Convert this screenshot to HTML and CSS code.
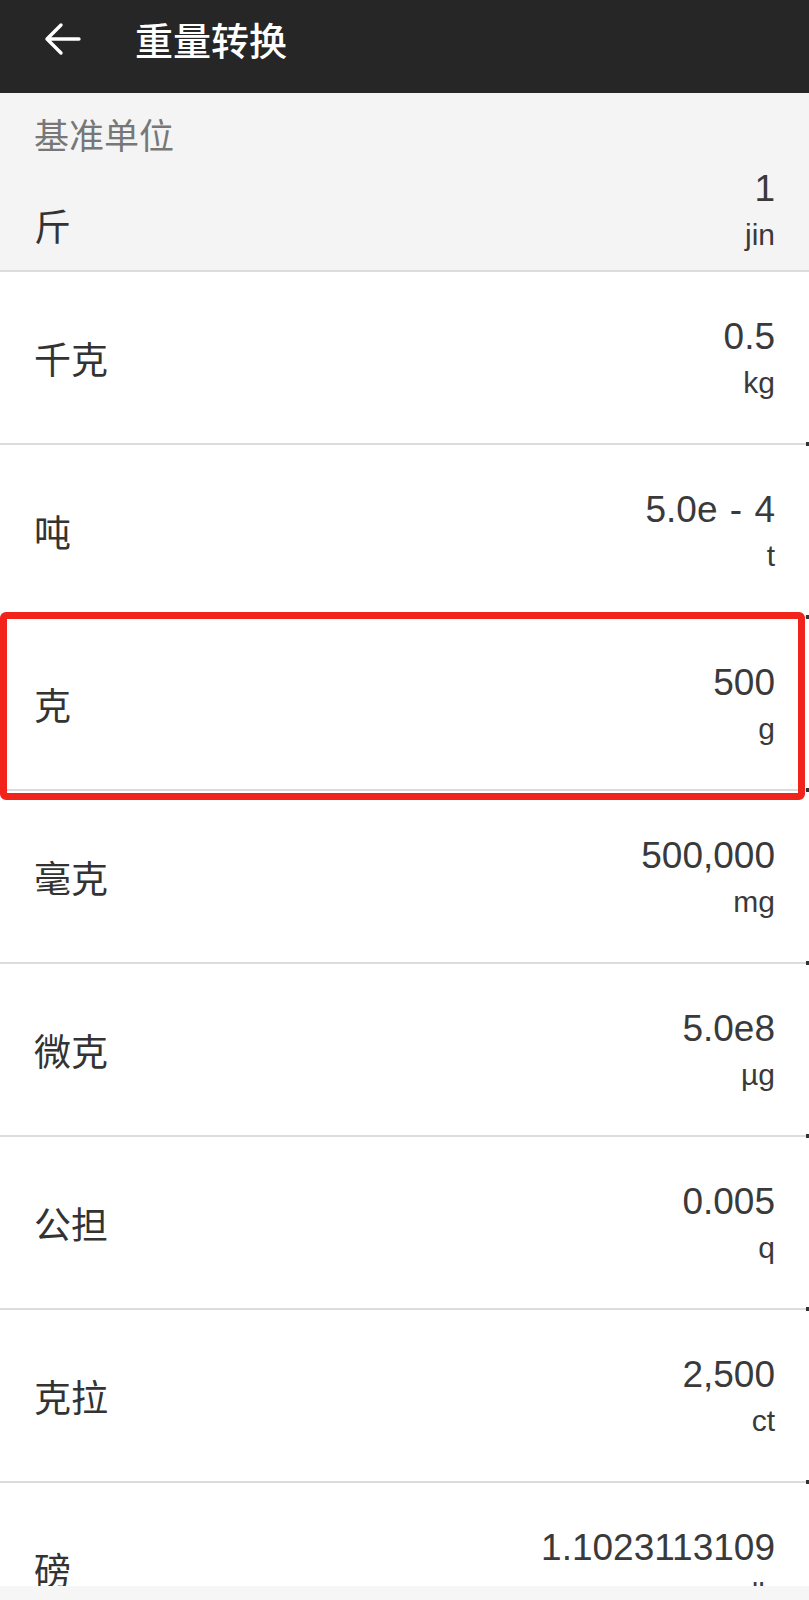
FILE: index.html
```html
<!DOCTYPE html>
<html lang="zh-CN">
<head>
    <meta charset="UTF-8">
    <meta name="viewport" content="width=device-width, initial-scale=1.0">
    <title>重量转换</title>
    <link rel="stylesheet" href="styles.css">
</head>
<body>
    <header class="topbar">
        <svg class="back" viewBox="0 0 40 34" width="40" height="34">
            <path d="M37 17H5M19 3L5 17L19 31" fill="none" stroke="#fff" stroke-width="3.4" stroke-linecap="round" stroke-linejoin="round"/>
        </svg>
        <h1 class="title">重量转换</h1>
    </header>

    <!-- Đơn vị gốc -->
    <section class="base">
        <div class="base-title">基准单位</div>
        <div class="base-row">
            <div class="name">斤</div>
            <div class="amount">
                <div class="value">1</div>
                <div class="unit">jin</div>
            </div>
        </div>
    </section>

    <main class="list">
        <div class="row">
            <div class="name">千克</div>
            <div class="amount"><div class="value">0.5</div><div class="unit">kg</div></div>
        </div>
        <div class="row">
            <div class="name">吨</div>
            <div class="amount"><div class="value">5.0e - 4</div><div class="unit">t</div></div>
        </div>
        <div class="row">
            <div class="name">克</div>
            <div class="amount"><div class="value">500</div><div class="unit">g</div></div>
            <div class="highlight"></div>
        </div>
        <div class="row">
            <div class="name">毫克</div>
            <div class="amount"><div class="value">500,000</div><div class="unit">mg</div></div>
        </div>
        <div class="row">
            <div class="name">微克</div>
            <div class="amount"><div class="value">5.0e8</div><div class="unit">µg</div></div>
        </div>
        <div class="row">
            <div class="name">公担</div>
            <div class="amount"><div class="value">0.005</div><div class="unit">q</div></div>
        </div>
        <div class="row">
            <div class="name">克拉</div>
            <div class="amount"><div class="value">2,500</div><div class="unit">ct</div></div>
        </div>
        <div class="row">
            <div class="name">磅</div>
            <div class="amount"><div class="value">1.1023113109</div><div class="unit">lb</div></div>
        </div>
    </main>

    <div class="bottom-band"></div>
</body>
</html>
```

FILE: styles.css
```css
/* Kiểu chung */
body {
    margin: 0;
    font-family: "Liberation Sans", "Noto Sans CJK SC", sans-serif;
    background-color: #fff;
    color: #333;
}

/* Thanh tiêu đề */
.topbar {
    height: 93px;
    box-sizing: border-box;
    padding-top: 16px;
    background-color: #262626;
    display: flex;
    align-items: flex-start;
}

.back {
    margin: 6px 0 0 42px;
}

.title {
    margin: 0 0 0 53px;
    font-family: "Noto Sans CJK SC", sans-serif;
    font-size: 38px;
    line-height: 46px;
    font-weight: 500;
    color: #fff;
}

/* Khung đơn vị gốc */
.base {
    background-color: #f4f4f4;
    border-bottom: 2px solid #dcdcdc;
    padding: 21px 34px 14px;
}

.base-title {
    font-family: "Noto Sans CJK SC", sans-serif;
    font-size: 35px;
    line-height: 40px;
    color: #777;
    margin-bottom: 10px;
}

.base-row {
    display: flex;
    justify-content: space-between;
    align-items: flex-end;
}

.base-row .name {
    margin-bottom: 11px;
}

/* Danh sách */
.row {
    position: relative;
    height: 171px;
    padding: 0 34px;
    border-bottom: 2px solid #dcdcdc;
    display: flex;
    justify-content: space-between;
    align-items: center;
}

.row::after {
    content: "";
    position: absolute;
    right: 0;
    bottom: -3px;
    width: 3px;
    height: 4px;
    background-color: #333;
}

.name {
    font-family: "Noto Sans CJK SC", sans-serif;
    font-size: 37px;
    line-height: 40px;
    color: #333;
}

.amount {
    text-align: right;
    color: #3a3a3a;
}

.value {
    font-size: 37px;
    line-height: 50px;
    word-spacing: 2px;
}

.unit {
    font-size: 30px;
    line-height: 42px;
}

/* Khung đỏ đánh dấu */
.highlight {
    position: absolute;
    top: -6px;
    left: 0;
    right: 4px;
    bottom: -11px;
    border: 7px solid #f2231a;
    border-radius: 6px;
}

.bottom-band {
    position: fixed;
    left: 0;
    right: 0;
    bottom: 0;
    height: 14px;
    background-color: #f6f6f6;
}
```
